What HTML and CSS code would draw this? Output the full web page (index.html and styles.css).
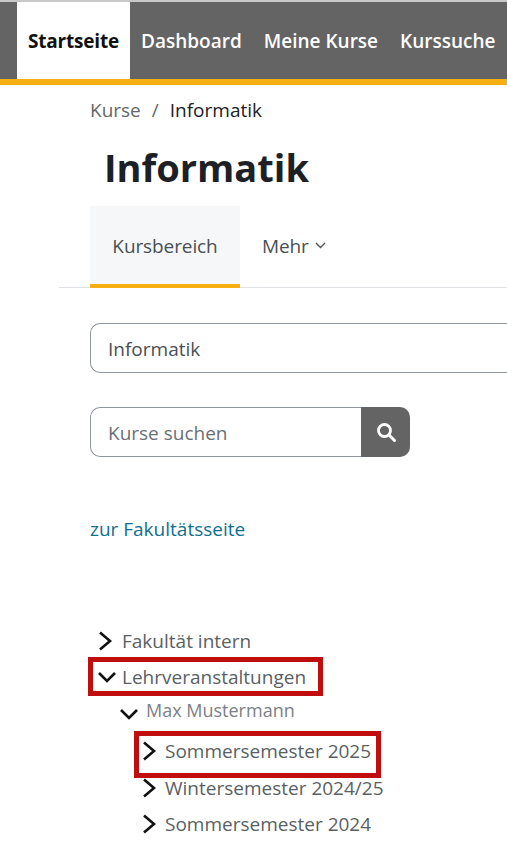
FILE: index.html
```html
<!DOCTYPE html>
<html lang="de">
<head>
    <meta charset="UTF-8">
    <meta name="viewport" content="width=device-width, initial-scale=1.0">
    <title>Informatik</title>
    <link rel="stylesheet" href="styles.css">
</head>
<body>
    <nav class="topnav">
        <a class="topnav-item active">Startseite</a>
        <a class="topnav-item">Dashboard</a>
        <a class="topnav-item">Meine Kurse</a>
        <a class="topnav-item">Kurssuche</a>
    </nav>

    <div class="breadcrumb">
        <span class="crumb-link">Kurse</span>
        <span class="crumb-sep">/</span>
        <span class="crumb-current">Informatik</span>
    </div>

    <h1>Informatik</h1>

    <div class="tabs">
        <a class="tab active">Kursbereich</a>
        <a class="tab">Mehr
            <svg class="tab-caret" width="11" height="7" viewBox="0 0 11 7"><path d="M1 1l4.500 4.500L10 1" fill="none" stroke="#555" stroke-width="1.4"/></svg>
        </a>
    </div>

    <main class="content">
        <div class="select-box">Informatik</div>

        <div class="search">
            <div class="search-input">Kurse suchen</div>
            <button class="search-btn" type="button">
                <svg width="22" height="22" viewBox="0 0 22 22"><circle cx="9.500" cy="9.500" r="6" fill="none" stroke="#fff" stroke-width="2.800"/><path d="M14 14l5.500 5.500" fill="none" stroke="#fff" stroke-width="3" stroke-linecap="round"/></svg>
            </button>
        </div>

        <a class="faculty-link">zur Fakultätsseite</a>

        <ul class="tree">
            <li class="tree-row level-0">
                <svg class="arrow" width="16" height="20" viewBox="0 0 16 20"><path d="M2 1.500l10 8.500-10 8.500" fill="none" stroke="#111" stroke-width="2.600"/></svg>
                <span>Fakultät intern</span>
            </li>
            <li class="tree-row level-0 marked">
                <svg class="arrow" width="18" height="12" viewBox="0 0 18 12"><path d="M1 2l8 8 8-8" fill="none" stroke="#111" stroke-width="2.600"/></svg>
                <span>Lehrveranstaltungen</span>
            </li>
            <li class="tree-row level-1 small">
                <svg class="arrow arrow-low" width="18" height="12" viewBox="0 0 18 12"><path d="M1 2l8 8 8-8" fill="none" stroke="#111" stroke-width="2.600"/></svg>
                <span>Max Mustermann</span>
            </li>
            <li class="tree-row level-2 marked">
                <svg class="arrow" width="16" height="20" viewBox="0 0 16 20"><path d="M2 1.500l10 8.500-10 8.500" fill="none" stroke="#111" stroke-width="2.600"/></svg>
                <span>Sommersemester 2025</span>
            </li>
            <li class="tree-row level-2">
                <svg class="arrow" width="16" height="20" viewBox="0 0 16 20"><path d="M2 1.500l10 8.500-10 8.500" fill="none" stroke="#111" stroke-width="2.600"/></svg>
                <span>Wintersemester 2024/25</span>
            </li>
            <li class="tree-row level-2">
                <svg class="arrow" width="16" height="20" viewBox="0 0 16 20"><path d="M2 1.500l10 8.500-10 8.500" fill="none" stroke="#111" stroke-width="2.600"/></svg>
                <span>Sommersemester 2024</span>
            </li>
        </ul>
    </main>
</body>
</html>
```

FILE: styles.css
```css
html, body {
    overflow: hidden;
}

body {
    font-family: 'Open Sans', 'Noto Sans', sans-serif;
    background-color: #fff;
    border-top: 2px solid #c8c8c8;
    color: #1d2125;
    margin: 0;
    padding: 0;
    height: 843px;
}

.topnav {
    display: flex;
    height: 77px;
    padding-left: 17px;
    background-color: #646464;
    border-bottom: 6px solid #f6b012;
    white-space: nowrap;
}

.topnav-item {
    display: flex;
    align-items: center;
    padding: 0 11px;
    font-size: 19px;
    font-weight: 600;
    color: #fff;
}

.topnav-item.active {
    background-color: #fff;
    color: #111;
    font-weight: 700;
    letter-spacing: -0.2px;
}

.breadcrumb {
    display: flex;
    gap: 11px;
    margin: 13px 0 0 90px;
    font-size: 19px;
    line-height: 24px;
}

.crumb-link, .crumb-sep {
    color: #666;
}

h1 {
    margin: 20px 0 0 104px;
    font-size: 38px;
    line-height: 50px;
    font-weight: 700;
}

.tabs {
    display: flex;
    margin: 14px 0 0 59px;
    padding-left: 31px;
    height: 81px;
    border-bottom: 1px solid #dee2e6;
    font-size: 19px;
    letter-spacing: -0.1px;
    color: #4a4f55;
}

.tab {
    display: flex;
    align-items: center;
    justify-content: center;
    height: 82px;
    box-sizing: border-box;
    padding: 1px 22px 4px;
}

.tab.active {
    width: 150px;
    padding: 1px 0 0;
    background-color: #f6f7f9;
    border-bottom: 4px solid #f6b012;
}

.tab-caret {
    margin-left: 6px;
}

.content {
    padding: 35px 0 0 90px;
}

.select-box {
    height: 50px;
    box-sizing: border-box;
    padding-left: 17px;
    border: 1px solid #8f959e;
    border-right: none;
    border-radius: 10px 0 0 10px;
    font-size: 19px;
    line-height: 50px;
    color: #4a4f55;
}

.search {
    display: flex;
    width: 320px;
    height: 50px;
    margin-top: 34px;
}

.search-input {
    flex: 1;
    box-sizing: border-box;
    padding-left: 17px;
    border: 1px solid #8f959e;
    border-right: none;
    border-radius: 10px 0 0 10px;
    font-size: 19px;
    line-height: 50px;
    color: #6a7077;
}

.search-btn {
    display: flex;
    align-items: center;
    justify-content: center;
    width: 49px;
    padding: 0;
    background-color: #646464;
    border: none;
    border-radius: 0 10px 10px 0;
}

.faculty-link {
    display: block;
    margin-top: 59px;
    font-size: 19px;
    line-height: 26px;
    color: #0f6f8f;
}

.tree {
    list-style: none;
    margin: 81px 0 0 0;
    padding: 0;
    font-size: 19px;
    color: #5a5f64;
}

.tree-row {
    display: flex;
    align-items: center;
    height: 36px;
    white-space: nowrap;
}

.arrow {
    flex: none;
}

.arrow-low {
    margin-top: 8px;
}

.level-0 {
    gap: 8px;
    margin-left: 8px;
}

.level-1 {
    gap: 8px;
    margin-left: 30px;
}

.level-2 {
    gap: 7px;
    margin-left: 52px;
}

.small {
    height: 30px;
    padding-bottom: 2px;
    box-sizing: border-box;
    font-size: 18px;
    color: #7c8186;
}

.marked {
    width: fit-content;
    box-shadow: 0 0 0 5px #c00d0d inset;
}

.level-0.marked {
    gap: 6px;
    height: 39px;
    margin-left: -2px;
    margin-top: -2px;
    padding: 0 17px 0 10px;
}

.level-2.marked {
    height: 47px;
    margin-left: 44px;
    margin-top: 5px;
    margin-bottom: -8px;
    box-sizing: border-box;
    padding: 0 10px 7px 8px;
}
```
